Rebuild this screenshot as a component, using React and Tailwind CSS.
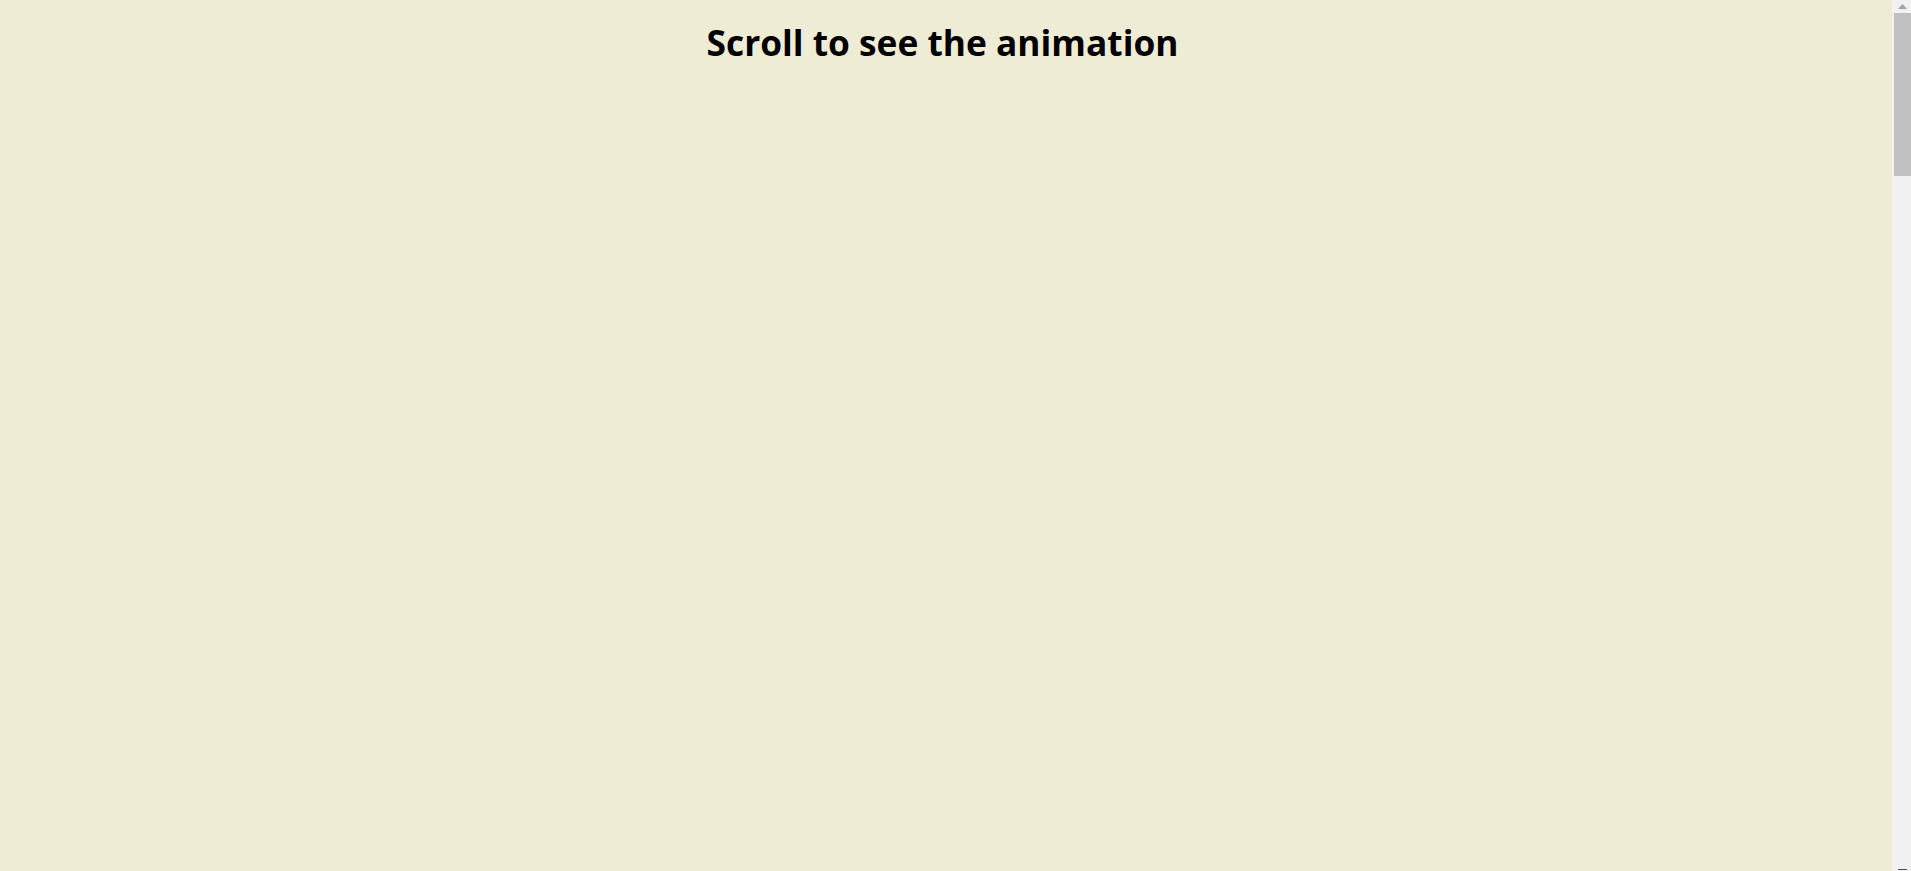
export default function App() {
  return (
    <div className="flex h-screen w-full overflow-hidden bg-[#efecd6]" style={{ fontFamily: '"Open Sans", sans-serif' }}>
      <main className="h-full flex-1 overflow-y-auto [scrollbar-width:none]">
        <div className="min-h-[4400px]">
          <h1 className="m-0 pt-[18px] pr-[7px] text-center text-[35.3px] font-bold leading-[48px] text-black">
            Scroll to see the animation
          </h1>
        </div>
      </main>
      <aside className="flex h-full w-[19px] shrink-0 flex-col bg-[#f1f1f1]">
        <div className="flex h-[13px] items-center justify-center pl-[2px]">
          <svg width="9" height="5" viewBox="0 0 9 5">
            <path d="M4.5 0 L9 5 L0 5 Z" fill="#a3a3a3" />
          </svg>
        </div>
        <div className="ml-[2px] h-[163px] bg-[#c1c1c1]" />
        <div className="flex-1" />
        <div className="flex h-[2px] justify-center pl-[2px]">
          <div className="h-[1px] w-[9px] bg-[#505050]" />
        </div>
      </aside>
    </div>
  );
}
